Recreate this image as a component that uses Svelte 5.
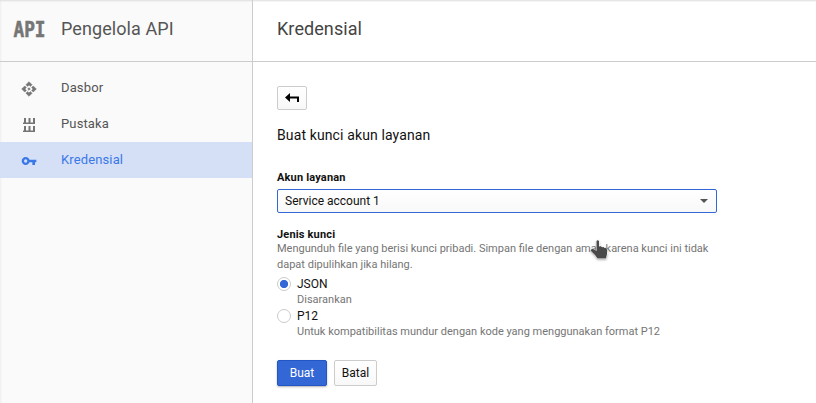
<script>
  let selected = $state('JSON');
  const nav = [
    { label: 'Dasbor', icon: 'dashboard' },
    { label: 'Pustaka', icon: 'library' },
    { label: 'Kredensial', icon: 'key', active: true }
  ];
  const types = [
    { name: 'JSON', note: 'Disarankan' },
    { name: 'P12', note: 'Untuk kompatibilitas mundur dengan kode yang menggunakan format P12' }
  ];
</script>

<div class="page">
  <aside>
    <div class="brand">
      <svg class="logo" width="40" height="30" viewBox="0 0 40 30">
        <text x="3.500" y="22.700" textLength="32" lengthAdjust="spacingAndGlyphs">API</text>
      </svg>
      <span>Pengelola API</span>
    </div>
    <nav>
      {#each nav as item}
        <div class="item" class:active={item.active}>
          {#if item.icon === 'dashboard'}
            <svg width="16" height="16" viewBox="0 0 24 24" fill="currentColor">
              <path d="M14 12l-2 2-2-2 2-2 2 2zm-2-6l2.120 2.120 2.500-2.500L12 1 7.380 5.620l2.500 2.500L12 6zm-6 6l2.120-2.120-2.500-2.500L1 12l4.620 4.620 2.500-2.500L6 12zm12 0l-2.120 2.120 2.500 2.500L23 12l-4.620-4.620-2.500 2.500L18 12zm-6 6l-2.120-2.120-2.500 2.500L12 23l4.620-4.620-2.500-2.500L12 18z" stroke="currentColor" stroke-width=".7" />
            </svg>
          {:else if item.icon === 'library'}
            <svg width="16" height="16" viewBox="0 0 16 16" fill="currentColor">
              <path d="M3 1h2v4.500h2.500V1h2v4.500H12V1h2v6H2V5.500h1zM3 9h2v4.500h2.500V9h2v4.500H12V9h2v6H2v-1.500h1z" />
            </svg>
          {:else}
            <svg width="16" height="16" viewBox="0 0 24 24" fill="currentColor">
              <path d="M12.650 10C11.830 7.670 9.610 6 7 6c-3.310 0-6 2.690-6 6s2.690 6 6 6c2.610 0 4.830-1.670 5.650-4H17v4h4v-4h2v-4H12.650zM7 14.500a2.500 2.500 0 1 1 0-5 2.500 2.500 0 0 1 0 5z" fill-rule="evenodd" />
            </svg>
          {/if}
          <span>{item.label}</span>
        </div>
      {/each}
    </nav>
  </aside>

  <main>
    <header>Kredensial</header>
    <section>
      <button class="back" aria-label="Kembali">
        <svg width="14" height="10" viewBox="0 0 14 10"><path d="M0 4.500L5 0v3.500h9V9h-2V5.500H5V9z" /></svg>
      </button>
      <h2>Buat kunci akun layanan</h2>
      <div class="label account">Akun layanan</div>
      <div class="select">
        <span>Service account 1</span>
        <svg width="8" height="4" viewBox="0 0 8 4"><path d="M0 0h8L4 4z" fill="#555" /></svg>
      </div>
      <div class="label">Jenis kunci</div>
      <p class="help">Mengunduh file yang berisi kunci pribadi. Simpan file dengan aman karena kunci ini tidak<br />dapat dipulihkan jika hilang.</p>
      <div class="options">
        {#each types as type}
          <label>
            <input type="radio" name="type" value={type.name} bind:group={selected} />
            <span class="name">{type.name}</span>
            <span class="note">{type.note}</span>
          </label>
        {/each}
      </div>
      <div class="actions">
        <button class="primary">Buat</button>
        <button>Batal</button>
      </div>
    </section>
  </main>

  <svg class="cursor" width="22" height="24" viewBox="0 0 22 24">
    <path d="M7.500 3Q8.700 1.300 10 3V8.500L11.500 8.200L13 9.200L14.500 8.900L15.500 9.900L17 9.700L18 11V16L17 20.500H8.500L6 17L1.500 12.500L3 10.800L5 11.200L7.500 13z" />
  </svg>
</div>

<style>
  :global(body) { margin: 0; background: #fff; }
  .page {
    position: relative;
    display: flex;
    width: 816px;
    height: 403px;
    overflow: hidden;
    font-family: Roboto, sans-serif;
    color: #111;
    box-shadow: inset 0 3px 2px -2px #ddd;
  }
  aside {
    box-sizing: border-box;
    width: 253px;
    background: #fafafa;
    border-right: 1px solid #ccc;
    box-shadow: inset 0 3px 2px -2px #ddd, inset 2px 0 2px -1px #eee;
  }
  .brand, header {
    box-sizing: border-box;
    height: 62px;
    border-bottom: 1px solid #ccc;
    font-size: 18px;
    line-height: 57px;
    letter-spacing: .08px;
    color: #555;
  }
  .brand { display: flex; padding-left: 10px; }
  .brand span { margin-left: 11px; }
  .logo { margin-top: 14px; }
  .logo text {
    font: bold 21px "DejaVu Sans Mono", monospace;
    letter-spacing: 0;
    fill: #757575;
    stroke: #757575;
    stroke-width: .6px;
  }
  nav { padding-top: 8px; }
  .item {
    display: flex;
    height: 36px;
    padding-left: 21px;
    font-size: 13px;
    line-height: 35px;
    letter-spacing: .13px;
    color: #555;
  }
  .item svg { margin: 11px 24px 0 0; color: #757575; }
  .item.active { background: #d5e0f7; color: #3b78e7; }
  .item.active svg { color: #3b78e7; }
  main { flex: 1; }
  header { padding-left: 24px; color: #444; }
  section { padding: 24px 0 0 24px; }
  button {
    display: block;
    box-sizing: border-box;
    height: 26px;
    padding: 0;
    border: 1px solid #ccc;
    border-radius: 2px;
    background: linear-gradient(#fff, #f8f8f8);
    font: 12px Roboto, sans-serif;
    color: #111;
  }
  .back { width: 30px; height: 24px; line-height: 0; }
  .back svg { vertical-align: top; }
  h2 { margin: 16px 0 0; font-size: 14px; font-weight: 400; line-height: 18px; letter-spacing: .12px; }
  .label { font-size: 11px; font-weight: 700; line-height: 14px; letter-spacing: .17px; color: #111; }
  .account { margin-top: 27px; }
  .select {
    display: flex;
    box-sizing: border-box;
    align-items: center;
    justify-content: space-between;
    width: 440px;
    height: 24px;
    margin: 4px 0 15px;
    padding: 0 8px 0 7px;
    border: 1px solid #3367d6;
    border-radius: 2px;
    background: linear-gradient(#fff, #f8f8f8);
    font-size: 12px;
  }
  .help { margin: -1px 0 0; font-size: 11px; line-height: 16px; color: #757575; }
  .options { margin-top: 3px; }
  label {
    display: grid;
    grid-template-columns: 20px 1fr;
    grid-template-rows: 16px 16px;
  }
  input {
    appearance: none;
    box-sizing: border-box;
    width: 14px;
    height: 14px;
    margin: 1px 0 0;
    border: 1px solid #ccc;
    border-radius: 50%;
    background: #fff;
  }
  input:checked { background: radial-gradient(circle, #3367d6 3.700px, #fff 4.500px); }
  .name { font-size: 12px; line-height: 17px; }
  .note { grid-column: 2; font-size: 11px; line-height: 15px; color: #757575; }
  .actions { display: flex; gap: 7px; margin-top: 20px; }
  .actions button { width: 43px; }
  .actions .primary {
    width: 50px;
    border-color: #2256c4;
    background: #3367d6;
    color: #fff;
    box-shadow: 0 1px 2px rgba(0, 0, 0, .3);
  }
  .cursor {
    position: absolute;
    left: 589px;
    top: 238px;
    fill: #4a4a4a;
    stroke: #fff;
    stroke-width: 1px;
    paint-order: stroke;
    filter: drop-shadow(0 1px 1px rgba(0, 0, 0, .3));
  }
</style>
